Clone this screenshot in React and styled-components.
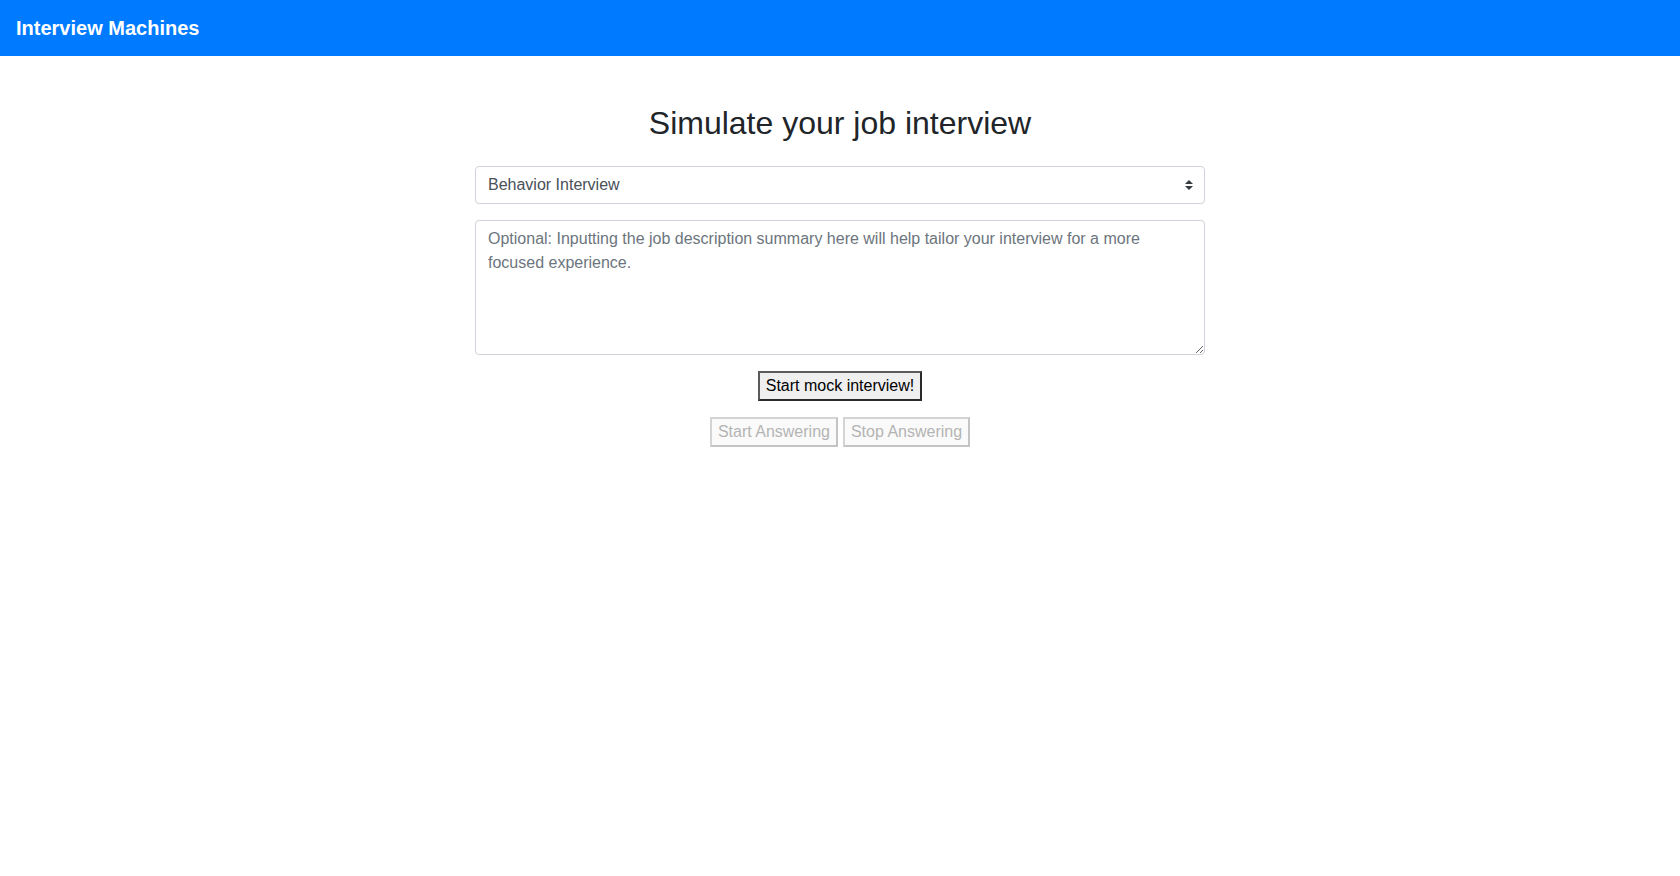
import { useState } from "react";
import styled, { createGlobalStyle } from "styled-components";

const GlobalStyle = createGlobalStyle`
  *, *::before, *::after {
    box-sizing: border-box;
  }
  body {
    margin: 0;
    font-family: "Liberation Sans", Arial, sans-serif;
    font-size: 16px;
    line-height: 1.5;
    color: #212529;
    background: #fff;
  }
`;

const S = {
  Navbar: styled.nav`
    display: flex;
    align-items: center;
    height: 56px;
    padding: 8px 16px;
    background-color: #007bff;
  `,
  Brand: styled.span`
    font-size: 20px;
    font-weight: 700;
    line-height: 30px;
    color: #fff;
  `,
  Main: styled.main`
    width: 730px;
    margin: 0 auto;
    padding-top: 48px;
    display: flex;
    flex-direction: column;
    align-items: center;
  `,
  Title: styled.h2`
    margin: 0 0 24px;
    font-size: 32px;
    font-weight: 500;
    line-height: 1.2;
    color: #212529;
  `,
  SelectWrap: styled.div`
    position: relative;
    width: 100%;
    margin-bottom: 16px;
  `,
  Select: styled.select`
    display: block;
    width: 100%;
    height: 38px;
    padding: 6px 28px 6px 12px;
    font-family: inherit;
    font-size: 16px;
    line-height: 24px;
    color: #495057;
    background: #fff;
    border: 1px solid #ced4da;
    border-radius: 4px;
    appearance: none;
    -webkit-appearance: none;
    outline: none;
  `,
  Arrows: styled.svg`
    position: absolute;
    right: 12px;
    top: 14px;
    width: 8px;
    height: 10px;
    pointer-events: none;
  `,
  TextArea: styled.textarea`
    display: block;
    width: 100%;
    height: 135px;
    padding: 6px 12px;
    margin: 0 0 16px;
    font-family: inherit;
    font-size: 16px;
    line-height: 24px;
    color: #495057;
    border: 1px solid #ced4da;
    border-radius: 4px;
    outline: none;
    &::placeholder {
      color: #6c757d;
    }
  `,
  Button: styled.button`
    margin: 0;
    padding: 1px 6px;
    font-family: inherit;
    font-size: 16px;
    line-height: 24px;
    color: #000;
    background-color: #efefef;
    border: 2px solid;
    border-color: #5a5a5a #2a2a2a #2a2a2a #5a5a5a;
    border-radius: 0;
    cursor: pointer;
    &:disabled {
      color: #b4b4b4;
      background-color: #fafafa;
      border-color: #d4d4d4 #c4c4c4 #c4c4c4 #d4d4d4;
      cursor: default;
    }
  `,
  AnswerRow: styled.div`
    display: flex;
    gap: 5px;
    margin-top: 16px;
  `,
};

const interviewTypes = ["Behavior Interview", "Technical Interview", "Case Interview"];

export default function App() {
  const [type, setType] = useState(interviewTypes[0]);
  const [description, setDescription] = useState("");

  return (
    <>
      <GlobalStyle />
      <S.Navbar>
        <S.Brand>Interview Machines</S.Brand>
      </S.Navbar>
      <S.Main>
        <S.Title>Simulate your job interview</S.Title>
        <S.SelectWrap>
          <S.Select value={type} onChange={(e) => setType(e.target.value)}>
            {interviewTypes.map((t) => (
              <option key={t}>{t}</option>
            ))}
          </S.Select>
          <S.Arrows viewBox="0 0 4 5">
            <path fill="#343a40" d="M2 0L0 2h4zm0 5L0 3h4z" />
          </S.Arrows>
        </S.SelectWrap>
        <S.TextArea
          value={description}
          onChange={(e) => setDescription(e.target.value)}
          placeholder="Optional: Inputting the job description summary here will help tailor your interview for a more focused experience."
        />
        <S.Button>Start mock interview!</S.Button>
        <S.AnswerRow>
          <S.Button disabled>Start Answering</S.Button>
          <S.Button disabled>Stop Answering</S.Button>
        </S.AnswerRow>
      </S.Main>
    </>
  );
}
